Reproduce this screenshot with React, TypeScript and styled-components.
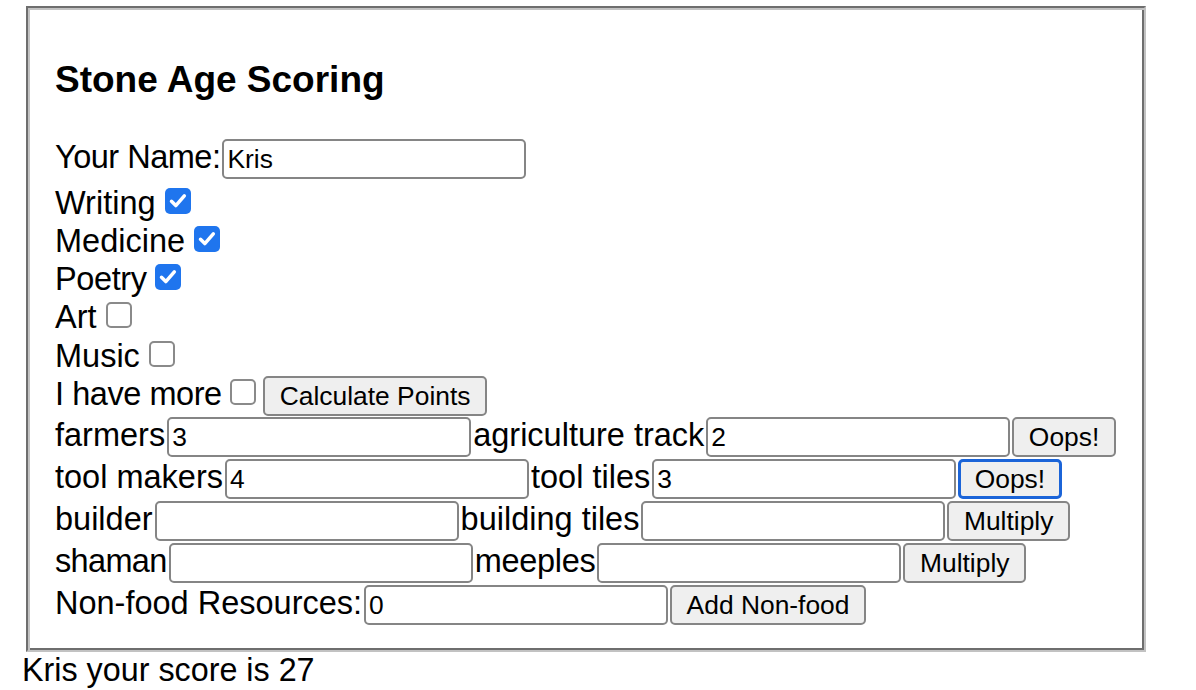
import React from "react";
import styled, { createGlobalStyle } from "styled-components";

const Global = createGlobalStyle`
  html, body { margin: 0; padding: 0; background: #ffffff; }
  body {
    font-family: "Liberation Sans", Arial, Helvetica, sans-serif;
    color: #000000;
  }
`;

const Page = styled.div`
  padding: 6px 0 0 22px;
  font-size: 32.5px;
`;

const Fieldset = styled.fieldset`
  box-sizing: border-box;
  width: 1120px;
  min-width: 0;
  margin: 0 0 0 4px;
  padding: 14px 25px 24px 27px;
  border: 2px solid;
  border-color: #6e6e6e #c2c2c2 #c2c2c2 #6e6e6e;
  box-shadow: inset 2px 2px 0 #c2c2c2, inset -2px -2px 0 #6e6e6e;
`;

const Title = styled.h3`
  margin: 37px 0;
  font-size: 37px;
  font-weight: 700;
  line-height: normal;
`;

const FieldRow = styled.div<{ $after?: number }>`
  display: flex;
  align-items: baseline;
  white-space: nowrap;
  margin-bottom: ${(p) => p.$after ?? 0}px;
`;

const Label = styled.span<{ $track?: number }>`
  font-size: 32.5px;
  line-height: normal;
  white-space: pre;
  letter-spacing: ${(p) => p.$track ?? 0}px;
`;

const CheckLine = styled.div<{ $track?: number }>`
  font-size: 32.5px;
  line-height: 38.3px;
  white-space: nowrap;
  letter-spacing: ${(p) => p.$track ?? 0}px;
`;

const Box = styled.span<{ $checked: boolean; $ml: number }>`
  display: inline-block;
  box-sizing: border-box;
  width: 26px;
  height: 26px;
  margin: 0 0 0 ${(p) => p.$ml}px;
  vertical-align: baseline;
  border-radius: 5px;
  border: ${(p) => (p.$checked ? "none" : "2px solid #8a8a8a")};
  background: ${(p) => (p.$checked ? "#1f75ee" : "#ffffff")};

  svg {
    display: block;
  }
`;

const TextInput = styled.input`
  box-sizing: border-box;
  width: 304px;
  height: 40px;
  margin: 1px 2px;
  padding: 0 3px;
  font-family: "Liberation Sans", Arial, Helvetica, sans-serif;
  font-size: 26.4px;
  letter-spacing: normal;
  color: #000000;
  background: #ffffff;
  border: 2px solid #858585;
  border-radius: 5px;
  outline: none;
`;

const Button = styled.button<{ $focus?: boolean; $ml?: number }>`
  box-sizing: border-box;
  height: 40px;
  margin: 0 0 0 ${(p) => p.$ml ?? 0}px;
  padding: 0 ${(p) => (p.$focus ? 13.5 : 14.5)}px;
  font-family: "Liberation Sans", Arial, Helvetica, sans-serif;
  font-size: 26.4px;
  letter-spacing: normal;
  line-height: normal;
  color: #000000;
  background: #efefef;
  border: ${(p) => (p.$focus ? "3px solid #1b64d8" : "2px solid #858585")};
  border-radius: 5px;
  white-space: nowrap;
`;

const Result = styled.div`
  font-size: 32.3px;
  line-height: normal;
`;

function Check({ checked, ml = 0 }: { checked: boolean; ml?: number }) {
  return (
    <Box $checked={checked} $ml={ml}>
      {checked && (
        <svg width="26" height="26" viewBox="0 0 26 26">
          <path
            d="M6.5 13.3 L10.8 17.6 L19.3 7.9"
            fill="none"
            stroke="#ffffff"
            strokeWidth="3.5"
            strokeLinecap="round"
            strokeLinejoin="round"
          />
        </svg>
      )}
    </Box>
  );
}

const skills: { name: string; checked: boolean; track?: number }[] = [
  { name: "Writing", checked: true },
  { name: "Medicine", checked: true },
  { name: "Poetry", checked: true, track: -0.4 },
  { name: "Art", checked: false },
  { name: "Music", checked: false },
];

type Pair = {
  a: string;
  av: string;
  at?: number;
  b: string;
  bv: string;
  bt?: number;
  btn: string;
  focus?: boolean;
};

const pairs: Pair[] = [
  { a: "farmers", av: "3", b: "agriculture track", bv: "2", btn: "Oops!" },
  { a: "tool makers", av: "4", b: "tool tiles", bv: "3", btn: "Oops!", focus: true },
  { a: "builder", av: "", b: "building tiles", bv: "", btn: "Multiply" },
  { a: "shaman", av: "", at: -0.65, b: "meeples", bv: "", bt: -0.3, btn: "Multiply" },
];

export default function App() {
  return (
    <>
      <Global />
      <Page>
        <Fieldset>
          <Title>Stone Age Scoring</Title>
          <FieldRow $after={3.5}>
            <Label $track={-0.5}>Your Name:</Label>
            <TextInput type="text" defaultValue="Kris" />
          </FieldRow>
          {skills.map((s) => (
            <CheckLine key={s.name} $track={s.track}>
              {s.name}
              {" "}
              <Check checked={s.checked} />
            </CheckLine>
          ))}
          <CheckLine $track={-0.45}>
            I have more{" "}
            <Check checked={false} />
            <Button $ml={7}>Calculate Points</Button>
          </CheckLine>
          {pairs.map((p) => (
            <FieldRow key={p.a}>
              <Label $track={p.at}>{p.a}</Label>
              <TextInput type="text" defaultValue={p.av} />
              <Label $track={p.bt}>{p.b}</Label>
              <TextInput type="text" defaultValue={p.bv} />
              <Button $focus={p.focus}>{p.btn}</Button>
            </FieldRow>
          ))}
          <FieldRow>
            <Label>Non-food Resources:</Label>
            <TextInput type="text" defaultValue="0" />
            <Button>Add Non-food</Button>
          </FieldRow>
        </Fieldset>
        <Result>Kris your score is 27</Result>
      </Page>
    </>
  );
}
